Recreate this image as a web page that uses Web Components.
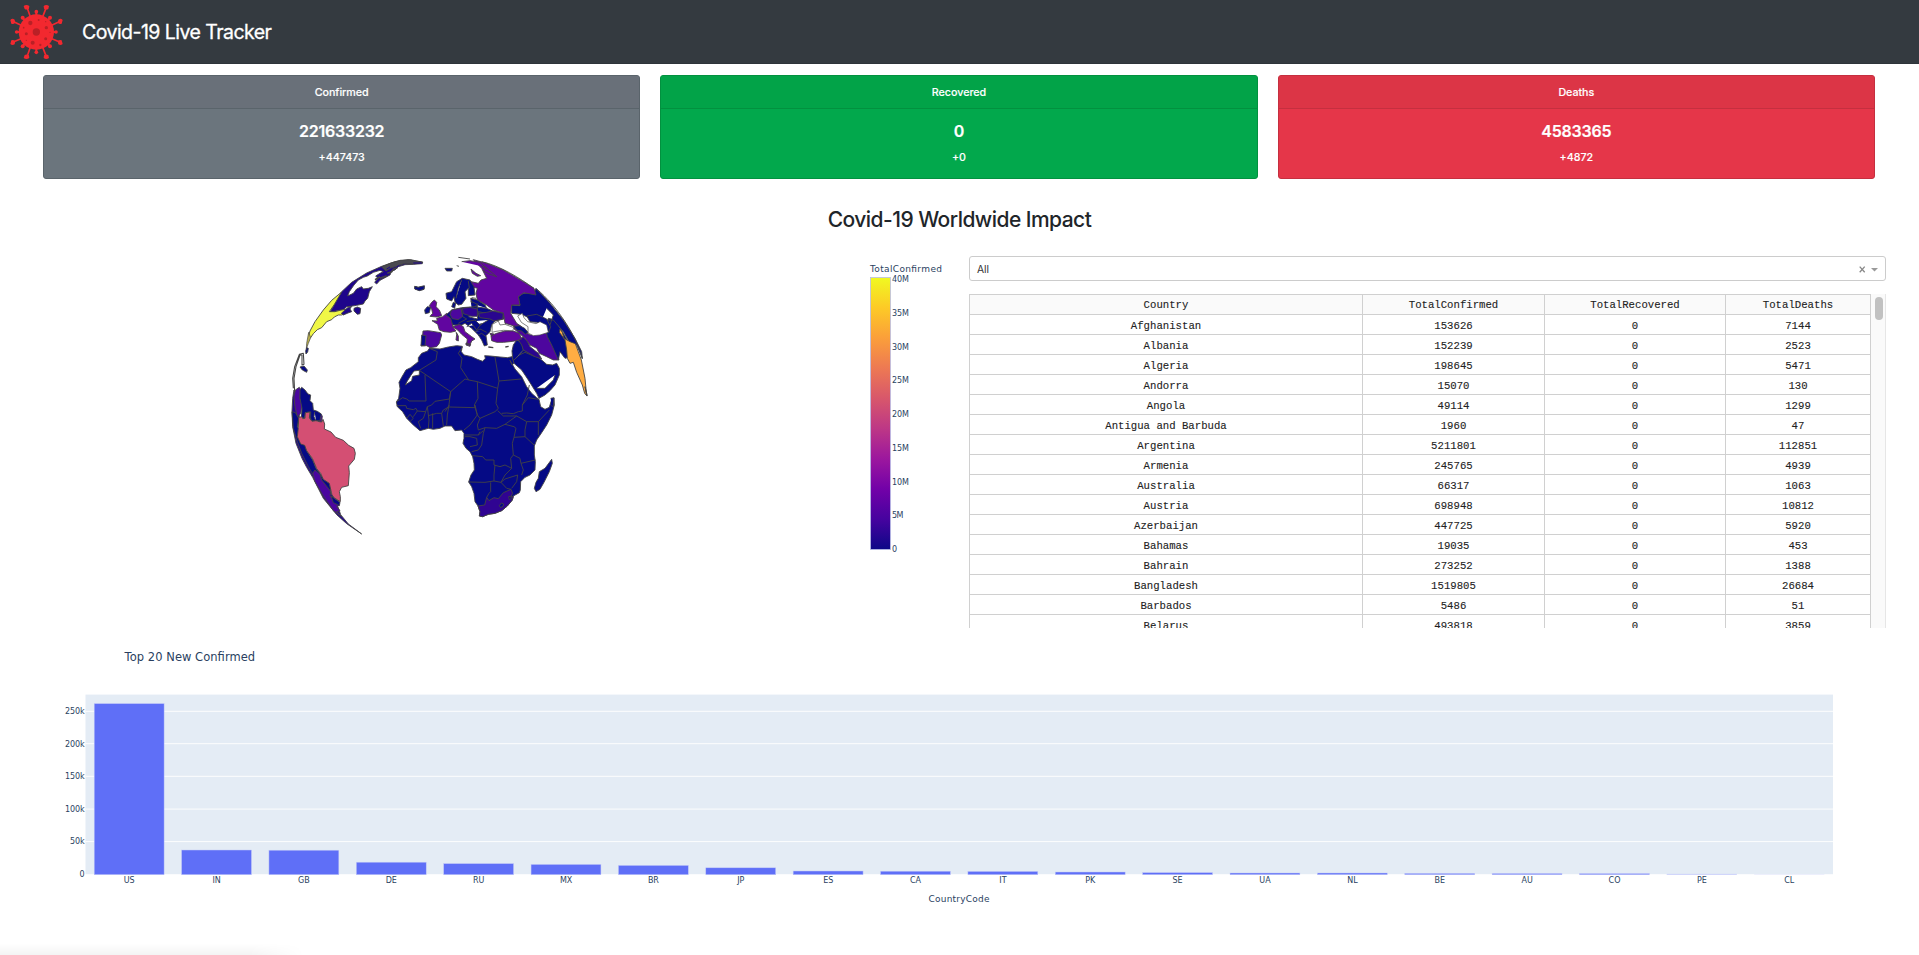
<!DOCTYPE html>
<html lang="en">
<head>
<meta charset="utf-8">
<title>Covid-19 Live Tracker</title>
<style>
html,body{margin:0;padding:0;background:#fff;height:100%;overflow:hidden}
body{font-family:Inter,"Liberation Sans",sans-serif;color:#212529}
</style>
</head>
<body>
<covid-app></covid-app>

<template id="t-app">
<style>
:host{display:flex;flex-direction:column;height:955px;position:relative;overflow:hidden}
.cards{display:grid;grid-template-columns:repeat(3,1fr);gap:20px;padding:11px 44px 0 43px}
h2{margin:0;padding-top:28px;height:77px;flex:none;box-sizing:border-box;line-height:26px;text-align:center;font-weight:500;font-size:21px;letter-spacing:-.54px}
.main{display:grid;grid-template-columns:969px 917px;height:372px;flex:none}
.right{display:flex;flex-direction:column;gap:13px}
.status{position:absolute;left:0;bottom:0;width:304px;height:12px;background:linear-gradient(to bottom,rgba(0,0,0,0),rgba(0,0,0,.045));-webkit-mask:linear-gradient(to right,#000 82%,transparent);mask:linear-gradient(to right,#000 82%,transparent)}
</style>
<nav-bar>Covid-19 Live Tracker</nav-bar>
<div class="cards">
<stat-card style="--bg:#6b757d;--head:#697079;--line:#5a646b" total="221633232" delta="+447473">Confirmed</stat-card>
<stat-card style="--bg:#02a84c;--head:#02a348;--line:#02913f" total="0" delta="+0">Recovered</stat-card>
<stat-card style="--bg:#e53649;--head:#dc3546;--line:#c52f3f" total="4583365" delta="+4872">Deaths</stat-card>
</div>
<h2>Covid-19 Worldwide Impact</h2>
<div class="main">
<globe-map></globe-map>
<div class="right"><select-box>All</select-box><data-table></data-table></div>
</div>
<bar-chart></bar-chart>
<div class="status"></div>
</template>

<template id="t-nav">
<style>
:host{display:flex;align-items:center;height:64px;flex:none;background:#343a40;color:#fff;box-sizing:border-box;border-bottom:1px solid #2e343a;padding-left:9px}
svg{width:55px;height:63px;flex:none}
span{margin-left:18px;font-size:19.5px;font-weight:400;letter-spacing:-.54px;-webkit-text-stroke:.3px #fff}
</style>
<svg viewBox="27 0 165 189">
<g id="sp" fill="none" stroke="#f2282f" stroke-width="5" stroke-linecap="round">
<path d="M92 53L81 22M127 53L139 22M68 78L38 64M150 78L181 64M68 114L38 127M150 114L181 127M92 139L81 170M127 139L139 170"/>
<path stroke-width="6" d="M109 46V36M109 146V156M60 96H51M158 96H167M74 60L68 54M144 60L150 54M74 132L68 138M144 132L150 138"/></g>
<g fill="#f2282f"><circle cx="109" cy="96" r="53"/>
<path d="M71 18Q79 12 88 18L87 26Q80 31 74 27ZM131 18Q139 12 147 18L145 27Q138 31 132 26ZM71 174Q79 180 88 174L87 166Q80 161 74 165ZM131 174Q139 180 147 174L145 165Q138 161 132 166ZM31 60Q37 53 44 59L46 68Q40 74 34 71ZM188 60Q182 53 175 59L173 68Q179 74 185 71ZM31 132Q37 138 44 133L46 124Q40 118 34 121ZM188 132Q182 138 175 133L173 124Q179 118 185 121Z"/>
<circle cx="109" cy="35" r="5.5"/><circle cx="109" cy="157" r="5.5"/><circle cx="50" cy="96" r="5.5"/><circle cx="168" cy="96" r="5.5"/><circle cx="68" cy="53" r="6"/><circle cx="150" cy="53" r="6"/><circle cx="68" cy="139" r="6"/><circle cx="150" cy="139" r="6"/></g>
<g fill="#b92026"><circle cx="109" cy="96" r="11"/><circle cx="91" cy="69" r="6.5"/><circle cx="98" cy="128" r="6"/><circle cx="139" cy="83" r="5"/><circle cx="79" cy="101" r="4.5"/><circle cx="137" cy="116" r="4.5"/><circle cx="116" cy="60" r="3"/><circle cx="121" cy="135" r="3.5"/><circle cx="71" cy="83" r="2.5"/><circle cx="137" cy="65" r="2"/><circle cx="150" cy="97" r="2"/><circle cx="79" cy="121" r="2"/></g>
</svg>
<span><slot></slot></span>
</template>

<template id="t-card">
<style>
:host{display:block;height:104px;box-sizing:border-box;border:1px solid var(--line);border-radius:3px;background:var(--bg);color:#fff;text-align:center;font-weight:500;font-size:10.7px;overflow:hidden}
.h{height:32px;line-height:33px;background:var(--head);border-bottom:1px solid var(--line);letter-spacing:-.02px;-webkit-text-stroke:.15px #fff}
b{display:block;font-weight:600;font-size:16px;line-height:20px;padding-top:12px;letter-spacing:-.22px;-webkit-text-stroke:.2px #fff}
.d{line-height:14px;padding-top:10px;-webkit-text-stroke:.15px #fff}
</style>
<div class="h"><slot></slot></div><b></b><div class="d"></div>
</template>

<template id="t-select">
<style>
:host{display:flex;align-items:center;height:25px;box-sizing:border-box;border:1px solid #ccc;border-radius:3px;padding:0 7px;font-size:10.3px;color:#333;flex:none}
svg{margin-left:auto;width:20px;height:10px}
</style>
<slot></slot>
<svg viewBox="0 0 20 10"><path d="M1.7 2.6L6.7 8.2M6.7 2.6L1.7 8.2" stroke="#888" stroke-width="1.3"/><path d="M13 4H20L16.5 7.5Z" fill="#999"/></svg>
</template>

<template id="t-table">
<style>
:host{display:flex;height:334px;overflow:hidden;font-family:"Liberation Mono",monospace;font-size:10.66px;color:#222}
table{border-collapse:collapse;table-layout:fixed;width:902px;height:1px;flex:none}
td,th{border:1px solid #d0d0d0;padding:3px 0 0;height:16px;line-height:16px;text-align:center;font-weight:400;overflow:hidden;white-space:nowrap;-webkit-text-stroke:.1px #222}
tr{height:20px}
th{background:#fafafa;padding:2px 0 1px}
.sb{width:15px;box-sizing:border-box;background:#fafafa;border-right:1px solid #e6e6e6;padding:3px 0 0 4px}
.sb i{display:block;width:8px;height:23px;border-radius:4px;background:#c1c1c1}
</style>
<table><colgroup><col style="width:393px"><col style="width:182px"><col style="width:181px"><col></colgroup><tbody></tbody></table>
<div class="sb"><i></i></div>
</template>

<template id="t-globe">
<style>
:host{display:block}svg{display:block}
text{font-family:"DejaVu Sans",sans-serif;fill:#2a3f5f}
</style>
<svg width="969" height="372" viewBox="0 256 969 372">
<defs><linearGradient id="pl" x1="0" y1="1" x2="0" y2="0"><stop offset="0" stop-color="#0d0887"/><stop offset=".111" stop-color="#46039f"/><stop offset=".222" stop-color="#7201a8"/><stop offset=".333" stop-color="#9c179e"/><stop offset=".444" stop-color="#bd3786"/><stop offset=".556" stop-color="#d8576b"/><stop offset=".667" stop-color="#ed7953"/><stop offset=".778" stop-color="#fb9f3a"/><stop offset=".889" stop-color="#fdca26"/><stop offset="1" stop-color="#f0f921"/></linearGradient></defs>
<g stroke="#444" stroke-width="2.7" stroke-linejoin="round" fill="#050a85">
<!-- North America -->
<g transform="translate(280 245) scale(.33333)">
<path fill="#1e058b" d="M185 140L215 112L260 84L305 64L345 50L385 44L400 47L428 51L427 56L400 58L375 59L355 65L345 75L335 78L330 90L315 98L300 106L290 117L284 112L294 100L287 93L300 85L310 80L300 76L280 82L262 93L250 97L235 105L222 120L208 140L203 153L220 145L230 132L245 125L250 132L265 130L277 125L268 140L263 160L255 168L250 177L230 181L212 184L200 185L190 195L178 196L150 202L162 180Z"/>
<path d="M405 124L415 127L433 124L432 133L418 136L405 132Z"/>
<path d="M305 66L330 55L360 46L392 44L428 52L400 57L375 55L355 62L330 70L318 78Z" fill="#4a4a50"/>
<path d="M322 85L335 80L340 73L352 68M300 100L320 92M285 104L300 95" fill="none" stroke-width="5"/>
<path d="M400 54L425 54M320 72L330 66M350 66L358 61" fill="none" stroke="#1e058b" stroke-width="3"/>
<path fill="#f0f746" d="M185 141L162 180L148 200L165 200L180 196L196 193L200 203L185 210L175 210L163 216L155 224L140 230L125 248L112 254L100 266L92 278L86 272L90 258L105 230L130 195L155 166Z"/>
<path fill="#1e058b" d="M184 205L195 195L203 188L215 184L210 192L215 200L204 204L190 210ZM222 190L232 186L242 190L240 206L232 208L222 198Z"/>
<path fill="#b9b04c" stroke-width="2" d="M86 262L92 278L85 295L79 312L80 295Z"/><path d="M80 308L85 310L83 321L78 327L77 318ZM60 366L72 363L82 375L80 382L67 375Z"/>
<path fill="none" d="M40 430L38 400L44 365L58 328L70 325L72 358L66 360L66 330L60 330L48 365L42 400L44 440" stroke-width="3.2"/>
</g>
<!-- South America -->
<g transform="translate(280 390) scale(.33333)">
<path fill="#220590" d="M42 0L38 25L36 65L38 110L48 160L66 205L80 232L98 262L130 325L170 374L200 401L245 432L205 402L182 374L178 362L170 340L150 304L118 270L90 225L75 175L62 160L52 110L58 80L52 30Z"/>
<path fill="#4a069f" d="M42 20L46 0L58 -8L62 0L60 25L66 45L62 70L52 82L45 50Z"/>
<path fill="#4a069f" d="M120 70L127 78L125 95L116 97Z"/>
<path d="M60 0L65 -8L75 0L84 12L92 15L90 32L98 40L100 60L112 64L124 72L120 92L96 93L88 82L90 66L76 68L74 84L64 84L66 55L60 25ZM92 64L92 92M104 66L102 80L108 93"/>
<path d="M36 65L46 68L56 85L52 110L58 120L52 140L62 160L75 165L80 182L98 210L108 235L120 250L130 268L148 280L154 304L138 295L122 272L104 262L85 230L65 190L50 150L40 115Z"/>
<path fill="#4a069f" d="M98 250L105 240L120 253L125 270L152 304L150 318L178 345L170 350L180 362L170 365L185 380L160 362L128 315L105 275Z"/>
<path fill="#d44f73" d="M56 82L66 80L68 86L75 85L76 68L90 66L88 84L96 94L108 92L118 95L125 96L129 88L134 102L133 117L153 126L167 142L190 151L206 166L222 175L226 190L223 208L206 228L208 248L205 287L185 292L178 305L181 320L181 335L165 325L156 315L153 302L148 280L130 268L122 250L110 236L97 205L80 182L74 166L62 162L52 140L55 112Z"/>
<path d="M153 318L180 337L178 347L160 338Z"/>
</g>
<g transform="translate(390 245) scale(.33333)">
<!-- Africa -->
<path d="M118 310L150 312L175 306L200 302L217 304L214 320L222 330L245 335L262 343L278 349L286 340L284 332L300 333L330 336L352 338L366 335L373 354L366 360L360 346L375 372L395 395L410 425L425 445L440 458L447 463L452 485L465 493L478 487L483 470L492 459L493 480L485 510L470 540L455 563L440 585L433 603L433 630L436 650L435 675L420 690L405 697L392 710L391 735L388 743L370 753L367 765L352 783L335 797L315 805L295 808L278 815L268 813L270 800L264 783L255 770L252 745L245 725L236 711L243 690L253 675L252 655L248 635L240 620L228 610L219 595L222 580L222 565L215 555L195 557L185 543L165 543L150 550L130 553L115 550L90 557L70 540L50 520L38 500L22 485L19 471L26 460L30 430L27 412L35 397L48 375L62 368L85 350L85 338L95 325L113 318Z"/>
<path fill="#fff" d="M46 420L65 407L68 394L88 390L88 376L72 378L62 392L52 408Z"/>
<path fill="#300492" d="M264 783L284 780L290 757L297 767L312 758L325 761L340 743L363 733L368 745L363 755L370 755L367 765L352 783L335 797L315 805L295 808L278 815L268 813L270 800Z"/>
<path d="M328 782L334 774L341 777L339 784L332 788ZM356 755L362 754L364 761L358 764Z"/>
<path d="M485 643L487 655L478 680L462 712L450 733L438 740L433 730L438 712L445 700L448 680L465 670Z"/>
<path fill="none" d="M118 310L142 320L138 345L88 376M88 376L182 440L225 402L236 405L212 368L216 340L205 325L217 306M105 390L108 468L58 468L50 462L38 458L20 470M182 440L178 462L135 469L125 480L112 485L107 500L82 498L78 490L70 494L50 490L48 482L20 482M236 405L262 410L264 460L253 480L257 488L176 486L182 440M262 410L323 430L327 408L315 336M327 408L394 402M323 430L318 475L325 490L315 500L270 520L262 510L255 480M323 497L340 513L380 513L410 530L445 530L478 495M380 513L345 538L372 545L378 550M335 505L350 504L370 506L385 500L397 498L397 480L412 450L418 420M397 480L415 458L445 463M410 530L405 555L405 575L372 577L378 550M405 575L432 600M445 530L445 570M372 577L367 595L370 630L362 640L365 670L345 660L330 665L312 660L312 645L287 645L278 635L248 632M370 630L390 640L393 655L436 645M393 655L400 675L395 690M365 670L345 690L333 712L312 708L312 690L315 660M312 708L285 712L236 711M302 712L302 740L297 745L290 757M333 712L350 730L363 733M333 712L345 702L383 690L380 710L365 730M345 538L320 550L285 548L265 555L262 540L270 520M285 548L280 565L275 600L265 615L245 620M225 570L265 570L270 560M225 575L240 575L260 580L262 600L240 605M265 570L280 557M253 480L262 510L240 540L222 555M176 486L172 510L170 540M155 505L160 543M128 505L128 550M115 512L140 505L155 505L160 495L176 486M112 485L117 525L115 550M107 500L100 520L85 530L92 550M70 515L82 498M50 520L60 508L70 520L60 530M178 480L165 500"/>
<!-- Near East -->
<path d="M368 340L366 318L370 300L380 285L395 292L400 315L435 330L455 345L470 358L488 360L500 355L508 370L508 390L495 420L480 437L465 450L447 460L440 445L415 405L395 375L372 355ZM372 345L388 330L400 315M388 330L405 322L435 335M440 430L465 430L490 405L495 390M482 460L492 458L490 485L484 482"/>
<path fill="#29058f" d="M385 285L400 275L412 288L420 305L445 325L455 342L435 335L400 315L395 300Z"/>
<path fill="#4d069e" d="M370 250L390 245L405 260L420 270L445 265L470 265L480 290L500 320L507 345L490 345L470 335L448 325L440 310L420 300L405 280L388 265Z"/>
<path d="M468 255L475 220L495 225L520 265L540 300L545 335L525 340L510 320L505 345L485 300L472 275Z"/>
<path d="M400 145L432 143L438 130L480 175L520 225L555 280L575 320L577 340L560 300L540 295L520 260L490 225L455 225L440 210L420 220L395 208L365 205L365 180L390 182L385 155ZM455 225L480 240L490 210L470 190"/>
<path d="M410 213L440 208L470 222L482 245L476 262L462 240L440 232L420 230Z"/>
<path fill="#fff" stroke-width="2" d="M383 213L397 205L402 218L413 230L438 236L450 230L470 240L475 262L450 270L430 272L414 264L414 245L394 232Z"/>
<path fill="#ffad43" d="M510 252L517 262L522 280L540 290L556 296L565 320L574 345L585 400L590 452L584 445L577 420L560 382L550 352L540 355L532 340L530 315L525 285L508 262Z"/>
<path fill="#6a5537" d="M585 425L592 452L590 452Z"/>
<!-- Europe -->
<path fill="#6105a0" d="M250 44L290 55L340 75L395 107L432 130L438 150L402 143L385 155L390 180L365 180L362 205L380 235L395 245L400 258L370 242L345 235L340 205L310 195L290 180L262 165L258 145L262 130L245 125L235 108L265 115L273 105L290 100L275 70Z"/>
<path d="M370 244L388 242L404 250L414 262L406 268L395 258L382 256Z"/>
<path d="M168 145L185 140L200 110L217 100L240 105L252 125L255 150L235 152L235 130L225 140L228 160L215 178L205 180L195 172L192 155L185 168L170 162ZM215 105L205 130L198 160M235 108L238 130M74 124L84 127L103 122L102 133L88 137L74 132ZM165 70L187 70L185 78L170 78ZM185 185L190 172L197 175L194 190Z"/>
<path fill="#6105a0" d="M125 172L133 165L140 172L138 185L148 195L155 212L140 216L120 214L128 205L125 192L118 182Z"/><path d="M104 195L112 185L122 187L118 203L106 206Z"/>
<path fill="#6105a0" d="M126 227L142 228L140 220L158 215L170 205L187 225L188 245L198 258L182 262L162 260L148 255L143 238Z"/>
<path d="M185 195L215 188L255 185L290 190L308 198L340 205L342 222L315 228L305 240L300 260L288 272L292 300L283 303L275 285L265 270L245 250L225 235L215 240L188 240L182 220L168 210ZM245 175L242 160L262 165L285 180L290 190M255 185L265 175M235 215L262 222L265 200L290 205M230 230L255 225L270 240L295 225M255 260L270 252L290 262M275 235L260 255L245 235L230 245M213 190L218 215L230 222L205 235M265 270L275 265L288 275M245 158L258 160M242 168L262 178L262 198L245 190"/>
<path fill="#4c079e" d="M185 195L213 190L218 214L205 224L187 221L180 208Z"/><path fill="#300492" d="M217 190L240 187L262 192L262 214L245 214L220 206Z"/><path fill="#29058f" d="M265 205L290 202L308 198L340 205L338 222L312 228L300 222L270 218Z"/>
<path fill="#4c079e" d="M99 258L115 257L152 263L155 270L148 295L140 305L120 308L110 302L93 303L97 285Z"/><path d="M95 270L108 272L105 302L93 302Z"/>
<path fill="#6105a0" d="M188 245L208 238L220 245L225 260L245 275L255 282L245 288L240 300L230 298L232 282L215 268L203 255ZM200 268L205 272L205 288L198 285ZM228 294L242 298L240 304L228 300Z"/>
<path fill="#6105a0" d="M303 272L320 265L345 258L370 258L388 265L395 282L380 287L360 290L340 292L320 292L305 287ZM300 265L312 267L305 274Z"/>
<path fill="#fff" stroke-width="2" d="M307 238L325 228L330 240L345 238L372 248L368 257L340 256L318 259L306 262Z"/>
<path d="M295 306L310 308M346 306L356 304M198 262L203 270" stroke-width="4"/>
<path fill="#6105a0" d="M243 72L258 85L272 92L262 94L247 85ZM205 37L240 42M215 50L240 47L270 52L320 95L300 88L280 78L290 70L275 64M200 62L207 64"/>
<path fill="none" d="M440 132C500 182 560 272 577 342M275 50C330 62 390 100 432 130"/>
</g></g>
<g font-size="9"><text x="870" y="271.8" textLength="72">TotalConfirmed</text></g>
<rect x="870.5" y="277.5" width="20" height="272" fill="url(#pl)" stroke="#b9bde6" stroke-width=".8"/>
<g id="ct" font-size="8"></g>
</svg>
</template>

<template id="t-bars">
<style>
:host{display:block}svg{display:block}
text{font-family:"DejaVu Sans",sans-serif;fill:#2a3f5f}
</style>
<svg width="1919" height="327" viewBox="0 628 1919 327">
<text x="124.6" y="661" font-size="11.5" textLength="130.5">Top 20 New Confirmed</text>
<rect x="85.5" y="694.6" width="1747.5" height="179.6" fill="#e4ecf5"/>
<g id="plot" font-size="8"></g>
<text x="928.5" y="901.6" font-size="9" textLength="61">CountryCode</text>
</svg>
</template>

<script>
const stamp=(el,id)=>{const r=el.attachShadow({mode:'open'});r.append(document.getElementById(id).content.cloneNode(true));return r;};
customElements.define('nav-bar',class extends HTMLElement{constructor(){super();stamp(this,'t-nav');}});
customElements.define('stat-card',class extends HTMLElement{connectedCallback(){if(this.shadowRoot)return;const r=stamp(this,'t-card');r.querySelector('b').textContent=this.getAttribute('total');r.querySelector('.d').textContent=this.getAttribute('delta');}});
customElements.define('select-box',class extends HTMLElement{constructor(){super();stamp(this,'t-select');}});
customElements.define('data-table',class extends HTMLElement{constructor(){super();const r=stamp(this,'t-table');
const rows=[['Afghanistan',153626,7144],['Albania',152239,2523],['Algeria',198645,5471],['Andorra',15070,130],['Angola',49114,1299],['Antigua and Barbuda',1960,47],['Argentina',5211801,112851],['Armenia',245765,4939],['Australia',66317,1063],['Austria',698948,10812],['Azerbaijan',447725,5920],['Bahamas',19035,453],['Bahrain',273252,1388],['Bangladesh',1519805,26684],['Barbados',5486,51],['Belarus',493818,3859]];
r.querySelector('tbody').innerHTML='<tr>'+['Country','TotalConfirmed','TotalRecovered','TotalDeaths'].map(h=>`<th>${h}</th>`).join('')+'</tr>'+rows.map(([c,n,d])=>`<tr><td>${c}</td><td>${n}</td><td>0</td><td>${d}</td></tr>`).join('');}});
customElements.define('globe-map',class extends HTMLElement{constructor(){super();const r=stamp(this,'t-globe');
r.getElementById('ct').innerHTML=[40,35,30,25,20,15,10,5,0].map((v,i)=>`<text x="892" y="${(282.2+i*33.72).toFixed(1)}"${v?` textLength="${v>5?17:11.5}"`:''}>${v?v+'M':0}</text>`).join('');}});
customElements.define('bar-chart',class extends HTMLElement{constructor(){super();const r=stamp(this,'t-bars');
const names='US IN GB DE RU MX BR JP ES CA IT PK SE UA NL BE AU CO PE CL'.split(' ');
const tops=[703.6,850,850.2,862.2,863.6,864.4,865.4,867.8,871,871.2,871.4,872,872.6,873,873,873.4,873.5,873.6,874,874.4];
let s='';
[['250k',711.3],['200k',743.7],['150k',776.3],['100k',809.1],['50k',841.6],['0',874.3]].forEach(([t,y])=>{
if(t!=='0')s+=`<path d="M85.5 ${y}H1833" stroke="#fff" stroke-width=".9"/>`;
s+=`<text x="84.6" y="${y+2.8}" text-anchor="end"${t.length>1?` textLength="${t.length>3?19.5:14.5}"`:''}>${t}</text>`;});
names.forEach((n,i)=>{const x=94.2+i*87.37,y=tops[i];
s+=`<rect x="${x.toFixed(2)}" y="${y}" width="69.9" height="${(874.7-y).toFixed(2)}" fill="#5f6ff7" stroke="#c3caf8" stroke-width=".5"${i>17?` opacity="${i>18?.25:.5}"`:''}/><text x="${(x+35).toFixed(1)}" y="883" text-anchor="middle">${n}</text>`;});
r.getElementById('plot').innerHTML=s;}});
customElements.define('covid-app',class extends HTMLElement{constructor(){super();stamp(this,'t-app');}});
</script>
</body>
</html>
